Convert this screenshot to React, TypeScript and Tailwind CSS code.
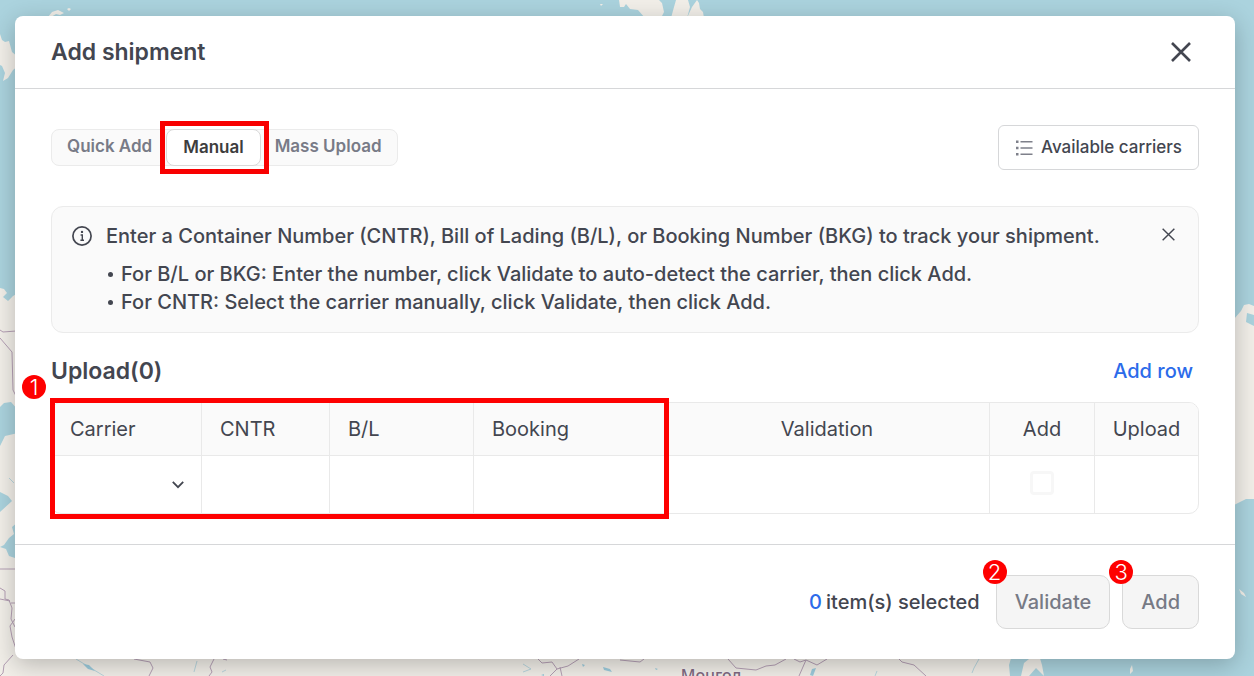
import { useState } from "react";

function MapBackdrop() {
  return (
    <svg
      className="absolute inset-0 h-full w-full"
      viewBox="0 0 1254 676"
      preserveAspectRatio="none"
      aria-hidden="true"
    >
      <rect width="1254" height="676" fill="#abd3de" />
      <g fill="#f2efe9">
        <path d="M0 34 L2 40 L5 42 L9 41 L12 52 L18 57 V66 L13 70 L8 78 L3 81 L5 73 L2 66 L0 65Z" />
        <path d="M48 17 L52 12 L58 10 L64 13 L60 15 L56 14 L51 17Z M67 9 l2 -1 l2 1 l-2 2Z" />
        <path d="M619 0 L620 7 L624 7 L626 4 L630 9 L638 10 L645 18 H661 L664 12 L662 3 L659 0Z" />
        <path d="M676 0 L674 7 L671 18 H687 L690 7 L688 0Z M697 0 L692 7 L687 18 H704 L703 12 L700 9 L699 3Z M600 4 l3 0 l-2 2Z" />
        <path d="M0 288 L4 289 L7 293 L3 297 L8 301 L13 296 L18 293 V410 L11 402 L4 403 L0 407Z" />
        <path d="M0 446 L5 436 L18 433 V522 L12 527 L14 534 L9 538 L4 545 L0 547 V512 L12 501 L8 496 L0 492Z M2 527 l3 -3 l3 3 l-4 2Z" />
        <path d="M0 547 L6 549 L9 556 L18 559 V655 H596 L1012 655 L1009 665 L1010 676 H0Z" />
        <path d="M1021 676 L1024 663 L1034 655 H1039 L1042 665 L1044 676 L1036 668 L1029 676Z" />
        <path d="M1234 319 L1241 311 L1244 305 L1249 304 L1254 306 V315 L1247 313 L1246 322 L1254 326 V499 L1246 499 L1234 505Z" />
        <path d="M1130 669 l2 -4 l1 6 l-3 3Z M1239 589 l5 4 l2 4 l-5 -3Z" />
      </g>
      <g fill="none" stroke="#b49fb4" strokeWidth="1">
        <path d="M0 330 L3 332 L16 331 M0 338 L12 352 L13 390 L16 396" />
        <path d="M0 569 H16 M0 588 L5 591 V599 L9 600 L12 608 L11 619 L15 627 M0 599 L10 601 M11 603 H15 M15 619 L10 626 L12 637 L16 649 M13 655 L4 665 L3 673 L0 676" />
        <path d="M134 659 L150 662 L153 668 L149 676 M214 659 L210 667 L212 672 L209 676 M223 659 l4 1" />
        <path d="M538 659 L542 663 L552 662 L557 669 L550 676 M557 669 L568 666 L579 659 M560 667 L562 676 M620 660 L640 662 L644 659" />
        <path d="M728 659 L736 668 L756 670 L766 666 L775 665 L786 659 M794 659 L800 662 L806 660 L799 676 M806 660 L817 665 L827 659" />
        <path d="M899 659 L902 662 L914 665 L926 676" />
      </g>
      <g fill="none" stroke="#b9d6de" strokeWidth="1">
        <path d="M76 659 L104 676 M197 661 l-3 11 M523 664 l8 5 l-8 3 M979 659 l-5 9 l-2 5 M875 676 l2 -5 M222 672 l4 -2 M9 478 l5 5" />
      </g>
      <g fill="#9ccbdc">
        <path d="M83 664 l6 1 l6 6 l-7 -2Z M603 667 l7 2 l2 3 l-8 -2Z M810 675 l2 -6 l4 -1 l-3 8Z M582 664 l3 1 l-2 2Z M541 675 l3 -1 v2Z M655 668 l3 1 l-2 1Z" />
      </g>
      <g fill="#806a82" stroke="#f4f1ee" strokeWidth="3" paintOrder="stroke">
        <text x="711" y="681" textAnchor="middle" className="font-['Noto_Sans',sans-serif] text-[16px] font-medium">
          Монгол
        </text>
      </g>
    </svg>
  );
}

function Cross({ size, stroke }: { size: number; stroke: number }) {
  return (
    <svg width={size} height={size} viewBox="0 0 20 20" fill="none" stroke="currentColor" strokeWidth={stroke} aria-hidden="true">
      <path d="M1 1 L19 19 M19 1 L1 19" />
    </svg>
  );
}

function Badge({ n, place }: { n: number; place: string }) {
  return (
    <span
      className={`absolute z-10 flex size-6 items-center justify-center rounded-full bg-[#fe0000] text-[22px] leading-none font-light text-white ${place}`}
    >
      {n}
    </span>
  );
}

const tab = "h-9 text-[17px] font-semibold text-[#787b87]";
const th = "border-r border-b border-[#e9e9e9] font-normal last:border-r-0";
const td = "border-r border-[#e9e9e9] last:border-r-0";
const cellInput = "h-12 w-full bg-transparent px-[18px] outline-none";
const action =
  "h-[54px] rounded-[10px] border border-[#d9d9d9] bg-[#f5f5f5] px-[18px] text-[20px] font-medium text-[#777a85]";

export default function App() {
  const [carrier, setCarrier] = useState("");
  return (
    <div className="relative flex min-h-screen flex-col overflow-hidden pt-4 pr-[19px] pb-[17px] pl-[15px] font-['Inter',sans-serif] text-[#434650]">
      <MapBackdrop />
      <section
        role="dialog"
        aria-labelledby="title"
        className="relative flex grow flex-col rounded-lg bg-white shadow-[0_6px_24px_rgba(0,0,0,0.24)]"
      >
        <header className="flex h-[73px] items-center justify-between border-b border-[#d6d7d9] px-9">
          <h1 id="title" className="text-[23px] font-semibold">Add shipment</h1>
          <button type="button" aria-label="Close" className="flex size-9 items-center justify-center">
            <Cross size={20} stroke={2.6} />
          </button>
        </header>

        <main className="flex grow flex-col px-9 pt-9">
          <div className="flex items-center justify-between">
            <div className="flex rounded-lg border border-[#ebebeb] bg-[#fafafa]">
              <button type="button" className={`${tab} -my-px pr-3.5 pl-[15px]`}>Quick Add</button>
              <div className="relative -my-px">
                <button type="button" className="h-[37px] rounded-lg border border-[#d9d9d9] bg-white px-4 text-[17px] font-semibold text-[#3d3d3d]">
                  Manual
                </button>
                <span className="pointer-events-none absolute -inset-x-1.5 -inset-y-2 -right-2 border-5 border-[#f80000]" />
              </div>
              <button type="button" className={`${tab} -my-px pr-[15px] pl-3.5`}>Mass Upload</button>
            </div>
            <button type="button" className="flex h-[45px] items-center gap-2 rounded-md border border-[#d6d7d9] px-4 text-[17px] font-medium">
              <svg width="18" height="16" viewBox="0 0 18 16" fill="#7e808a" aria-hidden="true">
                <path d="M1 0.5h2.5v2.6H1z M1 6.7h2.5v2.6H1z M1 12.9h2.5v2.6H1z M5.5 1h12v1.6h-12z M5.5 7.2h12v1.6h-12z M5.5 13.4h12V15h-12z" />
              </svg>
              Available carriers
            </button>
          </div>

          <aside className="mt-9 flex items-start rounded-xl border border-[#ebebeb] bg-[#fafafa] px-5 pt-[15px] pb-4 text-[20px] leading-7 font-medium">
            <svg className="mt-1 mr-3.5 shrink-0" width="20" height="20" viewBox="0 0 20 20" fill="none" stroke="currentColor" aria-hidden="true">
              <circle cx="10" cy="10" r="9.1" strokeWidth="1.7" />
              <path d="M8.6 9h1.7v5M8.4 14.2h3.6" strokeWidth="1.4" />
              <circle cx="10" cy="5.9" r="1.2" fill="currentColor" stroke="none" />
            </svg>
            <div className="grow">
              <p>Enter a Container Number (CNTR), Bill of Lading (B/L), or Booking Number (BKG) to track your shipment.</p>
              <ul className="mt-2.5">
                <li className="flex items-center gap-2">
                  <i className="ml-0.5 size-[5px] rounded-full bg-current" />
                  For B/L or BKG: Enter the number, click Validate to auto-detect the carrier, then click Add.
                </li>
                <li className="flex items-center gap-2">
                  <i className="ml-0.5 size-[5px] rounded-full bg-current" />
                  For CNTR: Select the carrier manually, click Validate, then click Add.
                </li>
              </ul>
            </div>
            <button type="button" aria-label="Dismiss" className="mt-0.5 flex size-5 shrink-0 items-center justify-center">
              <Cross size={13} stroke={2.2} />
            </button>
          </aside>

          <div className="relative mt-6 flex h-7 items-center justify-between">
            <h2 className="text-[23px] font-semibold">Upload(0)</h2>
            <button type="button" className="px-1.5 text-[20px] font-medium text-[#2c6bea]">Add row</button>
            <Badge n={1} place="top-[18px] -left-[29px]" />
          </div>

          <div className="relative mt-[17px]">
            <div className="overflow-hidden rounded-[10px] border border-[#e9e9e9]">
              <table className="w-full table-fixed border-separate border-spacing-0 text-[20px]">
                <colgroup>
                  <col className="w-[150px]" />
                  <col className="w-32" />
                  <col className="w-36" />
                  <col className="w-[191px]" />
                  <col />
                  <col className="w-[105px]" />
                  <col className="w-[103px]" />
                </colgroup>
                <thead className="bg-[#fafafa]">
                  <tr className="h-[53px]">
                    <th className={`${th} px-[18px] text-left`}>Carrier</th>
                    <th className={`${th} px-[18px] text-left`}>CNTR</th>
                    <th className={`${th} px-[18px] text-left`}>B/L</th>
                    <th className={`${th} px-[18px] text-left`}>Booking</th>
                    <th className={th}>Validation</th>
                    <th className={th}>Add</th>
                    <th className={th}>Upload</th>
                  </tr>
                </thead>
                <tbody>
                  <tr className="h-[57px]">
                    <td className={td}>
                      <div className="relative">
                        <select
                          aria-label="Carrier"
                          value={carrier}
                          onChange={(e) => setCarrier(e.target.value)}
                          className="h-12 w-full appearance-none bg-transparent px-[18px] outline-none"
                        >
                          <option value="" />
                        </select>
                        <svg className="pointer-events-none absolute top-5 right-[17px]" width="12" height="8" viewBox="0 0 12 8" fill="none" stroke="currentColor" strokeWidth="1.8" aria-hidden="true">
                          <path d="M0.8 0.9 L6 6.2 L11.2 0.9" />
                        </svg>
                      </div>
                    </td>
                    <td className={td}><input aria-label="CNTR" className={cellInput} /></td>
                    <td className={td}><input aria-label="B/L" className={cellInput} /></td>
                    <td className={td}><input aria-label="Booking" className={cellInput} /></td>
                    <td className={td} />
                    <td className={`${td} pb-1`}>
                      <input
                        type="checkbox"
                        aria-label="Add"
                        className="mx-auto block size-6 appearance-none rounded border-3 border-[#f7f7f7]"
                      />
                    </td>
                    <td className={td} />
                  </tr>
                </tbody>
              </table>
            </div>
            <span className="pointer-events-none absolute -top-1 -bottom-[5px] -left-px w-[619px] border-5 border-[#fe0000]" />
          </div>
        </main>

        <footer className="mt-[30px] flex h-[115px] items-center justify-end border-t border-[#d6d7d9] px-9">
          <p className="mr-4 flex gap-1 text-[20px] font-medium">
            <span className="text-[#2c6bea]">0</span>
            <span>item(s) selected</span>
          </p>
          <div className="relative mr-3">
            <button type="button" className={action}>Validate</button>
            <Badge n={2} place="-top-[15px] -left-[13px]" />
          </div>
          <div className="relative">
            <button type="button" className={action}>Add</button>
            <Badge n={3} place="-top-[15px] -left-[13px]" />
          </div>
        </footer>
      </section>
    </div>
  );
}
